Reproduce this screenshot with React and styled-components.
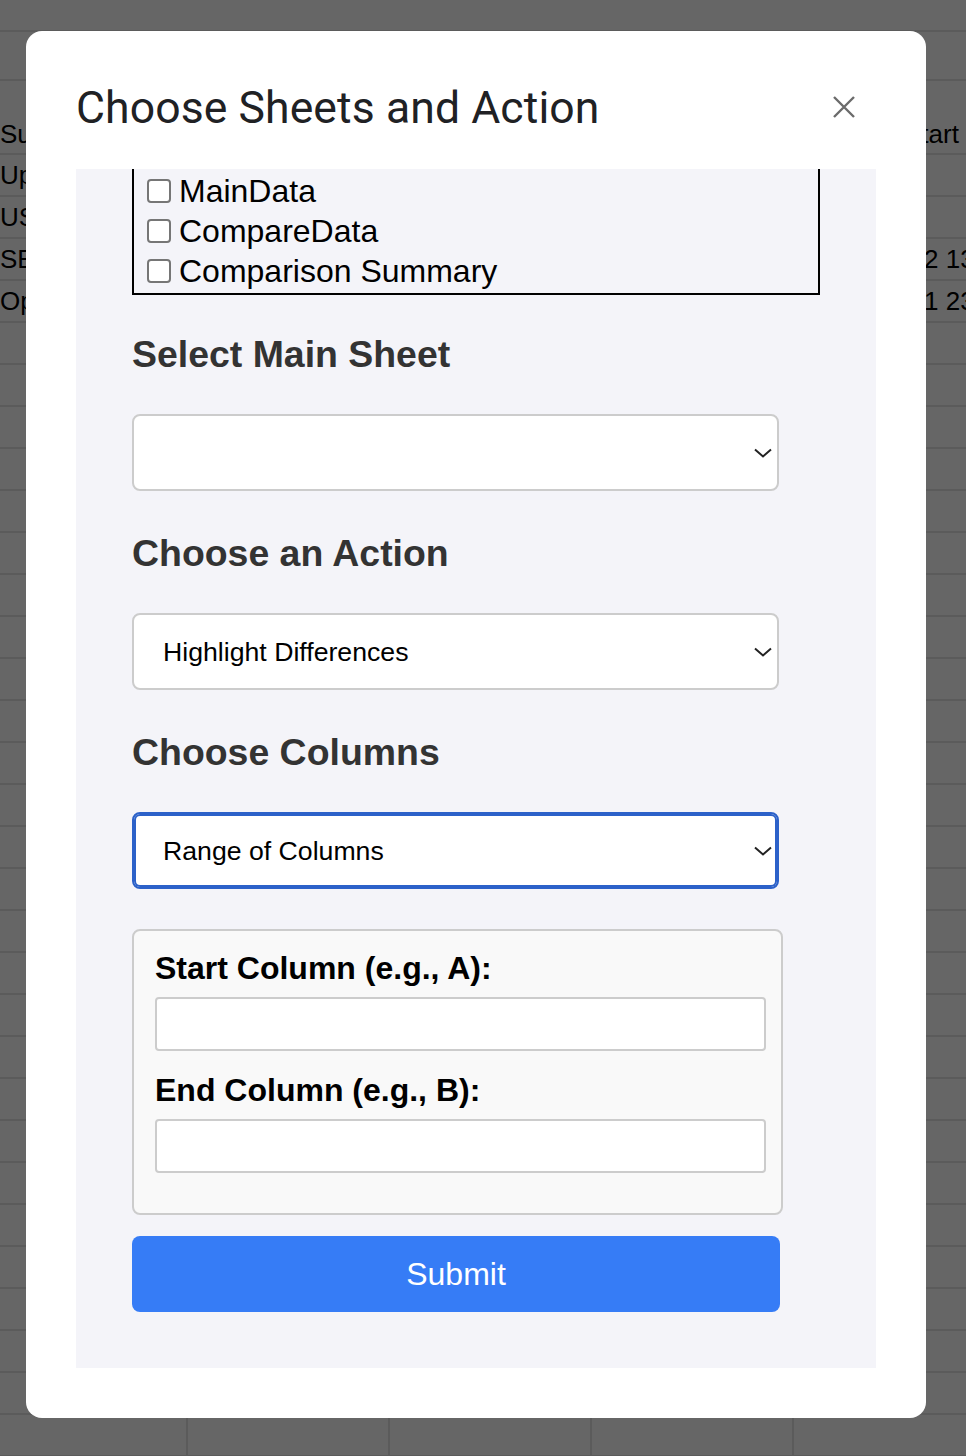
import React, { useLayoutEffect, useRef } from "react";
import styled, { createGlobalStyle, css } from "styled-components";

const GlobalStyle = createGlobalStyle`
  * {
    box-sizing: border-box;
  }
  html, body {
    margin: 0;
    padding: 0;
    background: #ffffff;
    overflow: hidden;
  }
`;

// spreadsheet behind the dialog
const Sheet = styled.div`
  width: 966px;
  height: 1456px;
  background: #ffffff;
  font-family: "Liberation Sans", Arial, sans-serif;
  font-size: 26px;
  color: #000;
  overflow: hidden;
`;

const Row = styled.div`
  display: grid;
  grid-template-columns: 188px repeat(4, 202px) 1fr;
  height: ${(p) => p.$height}px;
  border-bottom: 2px solid #e4e4e4;
`;

const Cell = styled.div`
  display: flex;
  align-items: ${(p) => (p.$bottom ? "flex-end" : "center")};
  padding-bottom: ${(p) => (p.$bottom ? "3px" : "0")};
  padding-left: ${(p) => p.$indent || 0}px;
  border-right: ${(p) => (p.$plain ? "none" : "2px solid #e4e4e4")};
  white-space: nowrap;
  overflow: hidden;
`;

const Dim = styled.div`
  position: fixed;
  inset: 0;
  background: rgba(0, 0, 0, 0.6);
`;

const Modal = styled.div`
  position: fixed;
  top: 31px;
  left: 26px;
  width: 900px;
  height: 1387px;
  background: #ffffff;
  border-radius: 16px;
  display: flex;
  flex-direction: column;
  padding: 0 50px 50px;
`;

const Header = styled.div`
  height: 138px;
  flex-shrink: 0;
  display: flex;
  align-items: center;
  justify-content: space-between;
  padding: 16px 70px 0 0;
  margin-right: -50px;
`;

const Title = styled.h1`
  margin: 0;
  font-family: Roboto, "Open Sans", sans-serif;
  font-weight: 400;
  font-size: 44.5px;
  letter-spacing: 0.1px;
  color: #202124;
`;

const CloseButton = styled.button`
  width: 24px;
  height: 24px;
  padding: 0;
  border: none;
  background: none;
  display: flex;
  align-items: center;
  justify-content: center;
  margin-top: -2px;
`;

const Frame = styled.div`
  position: relative;
  flex: 1;
  background: #f4f4f9;
  overflow: hidden;
  font-family: "Liberation Sans", Arial, sans-serif;
`;

const FrameBody = styled.div`
  padding: 38px 0 56px 56px;
`;

const Heading = styled.h3`
  margin: ${(p) => (p.$first ? "38px" : "0")} 0 38px;
  font-size: 37.44px;
  line-height: 43px;
  font-weight: 700;
  color: #333333;
`;

const SheetBox = styled.div`
  width: 688px;
  border: 2px solid #000;
  padding: 2px 0 2px;
`;

const CheckRow = styled.label`
  display: flex;
  align-items: center;
  height: 40px;
  font-size: 32px;
  color: #000;
`;

const Check = styled.input.attrs({ type: "checkbox" })`
  appearance: none;
  width: 24px;
  height: 24px;
  margin: 0 8px 0 13px;
  border: 2px solid #767676;
  border-radius: 4px;
  background: #fff;
`;

const Section = styled.div`
  margin-bottom: 41px;
`;

const SelectWrap = styled.div`
  position: relative;
  width: 647px;
  height: 77px;
`;

const Select = styled.select`
  appearance: none;
  width: 100%;
  height: 100%;
  border: 2px solid #cccccc;
  border-radius: 8px;
  background: #ffffff;
  font-family: "Liberation Sans", Arial, sans-serif;
  font-size: 26.67px;
  color: #000;
  padding: 0 40px 0 29px;
  outline: none;
  ${(p) =>
    p.$focused &&
    css`
      border-color: #2c61c9;
      box-shadow: inset 0 0 0 2px #2c61c9;
    `}
`;

const Chevron = styled.svg`
  position: absolute;
  right: 7px;
  top: 50%;
  margin-top: -5px;
  pointer-events: none;
`;

const RangeBox = styled.div`
  width: 651px;
  background: #f9f9f9;
  border: 2px solid #cccccc;
  border-radius: 8px;
  padding: 19px 20px 19px 21px;
  margin-top: -1px;
`;

const FieldLabel = styled.label`
  display: block;
  font-size: 32px;
  line-height: 37px;
  font-weight: 700;
  color: #000;
  margin-bottom: 10px;
`;

const TextInput = styled.input`
  display: block;
  width: 611px;
  height: 54px;
  border: 2px solid #cccccc;
  border-radius: 4px;
  background: #fff;
  margin-bottom: 21px;
`;

const SubmitButton = styled.button`
  display: block;
  width: 648px;
  height: 76px;
  margin-top: 21px;
  border: none;
  border-radius: 8px;
  background: #367cf6;
  color: #ffffff;
  font-family: "Liberation Sans", Arial, sans-serif;
  font-size: 32px;
`;

const sheetRows = [
  { h: 32 },
  { h: 49 },
  { h: 74, left: "Summary", right: "Start Date", bottom: true, rightIndent: 110 },
  { h: 42, left: "Update" },
  { h: 42, left: "USD" },
  { h: 42, left: "SEK", right: "2 13:45", rightIndent: 130 },
  { h: 42, left: "Open", right: "1 23:10", rightIndent: 130 },
];

const SelectBox = ({ value, focused, children }) => (
  <SelectWrap>
    <Select $focused={focused} defaultValue={value}>
      {children}
    </Select>
    <Chevron width="18" height="10" viewBox="0 0 18 10">
      <path d="M1 1.5 L9 8.5 L17 1.5" fill="none" stroke="#222" strokeWidth="2" />
    </Chevron>
  </SelectWrap>
);

export default function App() {
  const frameRef = useRef(null);
  const firstRef = useRef(null);

  // the dialog body is scrolled so the sheet list starts just under the header
  useLayoutEffect(() => {
    if (frameRef.current && firstRef.current) {
      frameRef.current.scrollTop = firstRef.current.offsetTop;
    }
  }, []);

  const rows = [...sheetRows];
  for (let i = 0; i < 28; i++) rows.push({ h: 42 });

  return (
    <>
      <GlobalStyle />
      <Sheet>
        {rows.map((r, i) => (
          <Row key={i} $height={r.h}>
            <Cell $bottom={r.bottom} $plain={i < 2}>{r.left}</Cell>
            <Cell $plain={i < 2} />
            <Cell $plain={i < 2} />
            <Cell $plain={i < 2} />
            <Cell $bottom={r.bottom} $plain={i < 2} $indent={r.rightIndent}>
              {r.right}
            </Cell>
            <Cell $plain />
          </Row>
        ))}
      </Sheet>
      <Dim />
      <Modal>
        <Header>
          <Title>Choose Sheets and Action</Title>
          <CloseButton aria-label="Close">
            <svg width="22" height="22" viewBox="0 0 22 22">
              <path
                d="M1 1 L21 21 M21 1 L1 21"
                stroke="#6b6b6b"
                strokeWidth="2.4"
                fill="none"
              />
            </svg>
          </CloseButton>
        </Header>
        <Frame ref={frameRef}>
          <FrameBody>
            <SheetBox>
              <CheckRow ref={firstRef}>
                <Check />
                MainData
              </CheckRow>
              <CheckRow>
                <Check />
                CompareData
              </CheckRow>
              <CheckRow>
                <Check />
                Comparison Summary
              </CheckRow>
            </SheetBox>
            <Heading $first>Select Main Sheet</Heading>
            <Section>
              <SelectBox value="">
                <option value=""></option>
                <option value="MainData">MainData</option>
                <option value="CompareData">CompareData</option>
              </SelectBox>
            </Section>
            <Heading>Choose an Action</Heading>
            <Section>
              <SelectBox value="highlight">
                <option value="highlight">Highlight Differences</option>
                <option value="summary">Create Summary</option>
              </SelectBox>
            </Section>
            <Heading>Choose Columns</Heading>
            <Section>
              <SelectBox value="range" focused>
                <option value="all">All Columns</option>
                <option value="range">Range of Columns</option>
              </SelectBox>
            </Section>
            <RangeBox>
              <FieldLabel htmlFor="start-col">Start Column (e.g., A):</FieldLabel>
              <TextInput id="start-col" type="text" />
              <FieldLabel htmlFor="end-col">End Column (e.g., B):</FieldLabel>
              <TextInput id="end-col" type="text" />
            </RangeBox>
            <SubmitButton>Submit</SubmitButton>
          </FrameBody>
        </Frame>
      </Modal>
    </>
  );
}
